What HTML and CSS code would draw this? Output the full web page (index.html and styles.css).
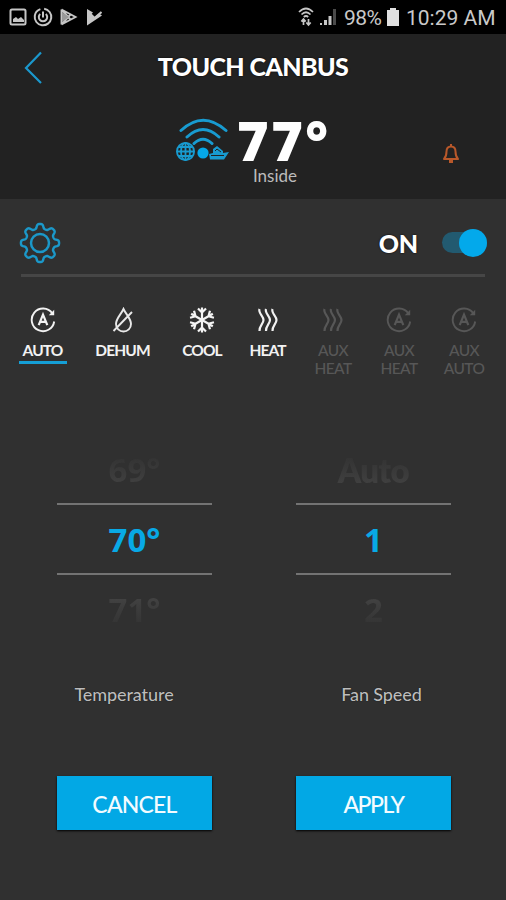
FILE: index.html
```html
<!DOCTYPE html>
<html lang="en">
<head>
<meta charset="utf-8">
<title>Touch Canbus</title>
<link rel="stylesheet" href="styles.css">
</head>
<body>
<svg class="defs" width="0" height="0" aria-hidden="true">
  <symbol id="auto" viewBox="0 0 26 26">
    <path d="M22.3 6.4A11.3 11.3 0 1 0 24.2 14.5" fill="none" stroke="currentColor" stroke-width="1.9"/>
    <path d="M24.200 2.800V8.200h-5.400z" fill="currentColor"/>
    <path d="M8.7 18.2L13 7.6l4.3 10.6M10.2 14.8h5.6" fill="none" stroke="currentColor" stroke-width="2.2"/>
  </symbol>
  <symbol id="heat" viewBox="0 0 22 26">
    <path d="M2.500 2C1 6 6.500 9 6.500 13S2 19 2.500 24M9 2C7.500 6 13 9 13 13S8.500 19 9 24M15.500 2C14 6 19.500 9 19.500 13S15 19 15.500 24" fill="none" stroke="currentColor" stroke-width="2.200"/>
  </symbol>
</svg>
<div class="status">
  <svg class="status-left" width="94" height="20" viewBox="0 0 94 20">
    <g fill="none" stroke="#c6c6c6" stroke-width="2">
      <rect x="2.500" y="2.500" width="15" height="15" rx="1.500"/>
      <circle cx="35" cy="10" r="8.300" stroke-dasharray="48 4" transform="rotate(-82 35 10)"/>
      <path d="M32.200 6.900a4.200 4.200 0 1 0 5.600 0M35 4.500v6"/>
    </g>
    <path d="M5 15v-3l3-2 2 2 3-2 3 3v2z" fill="#c6c6c6"/>
    <path d="M53.500 2.500v15M53.500 2.500l14 7.500-14 7.500M53.500 2.500l9 10M53.500 17.500l9-10" fill="none" stroke="#c6c6c6" stroke-width="1.900"/>
    <path d="M54 5l7 5-7 5z" fill="#999"/>
    <path d="M79 2v16.500l15-10-3-2-5 4-3-3 2-2z" fill="#c6c6c6"/>
    <path d="M82.500 7l4 4L93.500 5" fill="none" stroke="#c6c6c6" stroke-width="2"/>
  </svg>
  <div class="status-right">
    <svg width="40" height="20" viewBox="0 0 40 20">
      <g fill="none" stroke="#c6c6c6" stroke-width="1.700">
        <path d="M1 5Q8 -2 15 5M3.500 7.500Q8 3 12.500 7.500M5.800 10Q8 8 10.200 10"/>
        <path d="M5.500 12v6M3.300 14.500L5.500 12l2.200 2.500M10.500 12v6M8.300 15.500L10.500 18l2.200-2.500"/>
      </g>
      <path d="M22 16h2v2h-2zM26 13h3v5h-3zM30.500 9h3v9h-3z" fill="#c6c6c6"/>
      <path d="M35 2h3v16h-3z" fill="#4a4a4a"/>
    </svg>
    <span class="pct">98%</span>
    <svg class="battery" width="12" height="18" viewBox="0 0 12 18"><path d="M0 2h3V0h6v2h3v16H0z" fill="#e0e0e0"/></svg>
    <span class="clock">10:29 AM</span>
  </div>
</div>
<header>
  <div class="titlebar">
    <svg width="20" height="34" viewBox="0 0 20 34"><path d="M17 2.500L2 18l15 15" fill="none" stroke="#1b98cd" stroke-width="2.200"/></svg>
    <h1>TOUCH CANBUS</h1>
  </div>
  <div class="reading">
    <svg class="wifi" width="54" height="46" viewBox="0 0 54 46">
      <g fill="none" stroke="#189bd0" stroke-width="3" stroke-linecap="round">
        <path d="M6 12.500Q28-8 51 12.500M12 19Q28 4 44 19M19 25.500Q28 17 37 25.500"/>
      </g>
      <circle cx="28" cy="35" r="5.600" fill="#05a8e8"/>
      <g fill="none" stroke="#189bd0" stroke-width="1.800">
        <circle cx="10.500" cy="33.500" r="8.600"/>
        <ellipse cx="10.500" cy="33.500" rx="4.500" ry="8.600"/>
        <path d="M10.500 25v17M2 33.500h17M3.500 29h14M3.500 38h14"/>
      </g>
      <path d="M34 36l4-1v-4l4-3 6 5v2l6-1-5 7.500H35z" fill="#189bd0"/>
      <path d="M40 33l2-2 4 3M36 37.500h13" fill="none" stroke="#222" stroke-width="1"/>
    </svg>
    <div class="temp"><strong>77°</strong><span class="inside">Inside</span></div>
    <svg class="bell" width="18" height="22" viewBox="0 0 18 22"><path d="M2 16c2-2 2.500-4 2.500-7.500 0-3 1.700-5 4.500-5s4.500 2 4.500 5c0 3.500.5 5.500 2.500 7.500zM9 1v2.500" fill="none" stroke="#b9582a" stroke-width="2" stroke-linejoin="round"/><path d="M7 16h4v4H7z" fill="#b9582a"/></svg>
  </div>
</header>
<main>
  <section class="power">
    <svg class="gear" width="42" height="42" viewBox="-21 -21 42 42">
      <path id="gear" d="" fill="none" stroke="#1b98c9" stroke-width="2.400" stroke-linejoin="round"/>
      <circle r="9" fill="none" stroke="#1b98c9" stroke-width="2.500"/>
    </svg>
    <span class="on">ON</span>
    <div class="switch"><i></i></div>
  </section>
  <nav>
    <div class="mode selected"><svg width="26" height="26"><use href="#auto"/></svg><span>AUTO</span></div>
    <div class="mode"><svg width="22" height="26" viewBox="0 0 22 26"><path d="M11.500 2C9 7.500 4 11.500 4 17a7.500 7.500 0 0 0 15 0C19 11.500 14 7.500 11.500 2zM1.500 24L20 5" fill="none" stroke="#e8e8e8" stroke-width="1.900"/></svg><span>DEHUM</span></div>
    <div class="mode"><svg width="26" height="26" viewBox="-13 -13 26 26"><g fill="none" stroke="#f4f4f4" stroke-width="2.200">
      <path d="M0-12.500V12.500M-4-11.500L0-7.500 4-11.500M-4 11.500L0 7.500 4 11.500"/>
      <path transform="rotate(60)" d="M0-12.500V12.500M-4-11.500L0-7.500 4-11.500M-4 11.500L0 7.500 4 11.500"/>
      <path transform="rotate(120)" d="M0-12.500V12.500M-4-11.500L0-7.500 4-11.500M-4 11.500L0 7.500 4 11.500"/></g></svg><span>COOL</span></div>
    <div class="mode"><svg width="22" height="26"><use href="#heat"/></svg><span>HEAT</span></div>
    <div class="mode off"><svg width="22" height="26"><use href="#heat"/></svg><span>AUX<br>HEAT</span></div>
    <div class="mode off"><svg width="26" height="26"><use href="#auto"/></svg><span>AUX<br>HEAT</span></div>
    <div class="mode off"><svg width="26" height="26"><use href="#auto"/></svg><span>AUX<br>AUTO</span></div>
  </nav>
  <section class="pickers">
    <div class="picker"><div class="ghost before">69°</div><div class="value">70°</div><div class="ghost after">71°</div><label class="t">Temperature</label><button class="cancel">CANCEL</button></div>
    <div class="picker"><div class="ghost before auto">Auto</div><div class="value">1</div><div class="ghost after">2</div><label class="f">Fan Speed</label><button class="apply">APPLY</button></div>
  </section>
</main>
<script src="gear.js"></script>
</body>
</html>
```
FILE: styles.css
```css
* { box-sizing: border-box; }
body { margin: 0; width: 506px; height: 900px; background: #303030; color: #fff; font-family: Lato, sans-serif; overflow: hidden; }
.defs { position: absolute; }
svg { display: block; flex: none; }
.status { height: 34px; background: #000; display: flex; justify-content: space-between; padding: 7px 10px 0 8px; color: #c9c9c9; font-family: Roboto, sans-serif; }
.status-right { display: flex; height: 20px; line-height: 22px; font-size: 21px; white-space: nowrap; }
.pct { margin-left: 6px; width: 43px; letter-spacing: -0.5px; }
.battery { margin-top: 1px; }
.clock { margin-left: 7px; width: 90px; }
header { height: 165px; background: #222; }
.titlebar { height: 66px; display: grid; grid-template-columns: 48px 1fr 48px; padding-top: 16px; }
.titlebar svg { margin-left: 24px; }
h1 { margin: 0; text-align: center; font-size: 25px; line-height: 33px; font-weight: 900; letter-spacing: -0.6px; white-space: nowrap; text-shadow: 0 0 2px #000; }
.reading { display: flex; padding-left: 175px; }
.wifi { margin-top: 18px; }
.temp { width: 110px; margin-left: 8px; }
.temp strong { display: block; height: 41px; margin-top: 19px; line-height: 43px; font-family: "Open Sans", sans-serif; font-size: 54px; font-weight: 800; letter-spacing: 2.500px; }
.inside { display: block; width: 76px; margin-top: 5px; text-align: center; font-size: 17px; line-height: 22px; color: #bbb; }
.bell { margin: 43px 0 0 95px; }
.power { height: 78px; margin: 0 21px; border-bottom: 3px solid #464646; display: flex; align-items: center; padding-top: 12px; }
.gear { margin-left: -2px; }
.on { margin-left: auto; font-size: 25px; font-weight: 900; letter-spacing: -0.2px; text-shadow: 0 0 2px #000; }
.switch { width: 45px; height: 21px; margin: 0 -2px 0 24px; border-radius: 11px; background: #225a70; display: flex; justify-content: flex-end; align-items: center; }
.switch i { width: 28px; height: 28px; border-radius: 50%; background: #03a9eb; flex: none; }
nav { height: 151px; padding: 30px 0 0 10px; display: grid; grid-template-columns: 65px 95px 64px 67px 64px 68px 62px; }
.mode { display: flex; flex-direction: column; align-items: center; color: #f2f2f2; }
.mode span { margin-top: 8px; font-size: 15.500px; font-weight: 700; line-height: 18px; letter-spacing: -0.9px; text-align: center; white-space: nowrap; }
.selected span { border-bottom: 3px solid #159fd6; width: 48px; height: 23px; }
.mode.off { color: #575757; }
.off span { font-weight: 500; letter-spacing: -0.6px; }
.pickers { display: grid; grid-template-columns: 155px 155px; column-gap: 84px; padding-left: 57px; }
.picker { display: flex; flex-direction: column; text-align: center; font-family: "Open Sans", sans-serif; font-size: 33px; font-weight: 700; }
.ghost { height: 75px; line-height: 84px; color: transparent; background-clip: text; -webkit-background-clip: text; }
.before { background-image: linear-gradient(#323232 35%, #404040 75%); }
.auto { font-family: Lato, sans-serif; font-weight: 800; line-height: 84px; letter-spacing: -0.5px; }
.after { height: 70px; line-height: 70px; background-image: linear-gradient(#434343 30%, #323232 75%); }
.value { height: 72px; line-height: 70px; color: #08a9e6; border: solid #737373; border-width: 2px 0; }
label { font-family: Lato, sans-serif; font-size: 18px; font-weight: 500; line-height: 24px; letter-spacing: -0.1px; color: #bcbcbc; margin-top: 37px; text-shadow: 0 0 1px #000; }
.t { margin-left: -21px; }
.f { margin-left: 16px; }
button { margin: 70px 0 0; padding: 0; height: 54px; border: 0; background: #02a8e5; color: #f2fbff; font: 500 23px/56px Lato, sans-serif; letter-spacing: -0.8px; box-shadow: 0 1px 2px #000; }
.apply { letter-spacing: -1.5px; }
```
FILE: gear.js
```js
// Eight-tooth gear outline
const points = [];
for (let i = 0; i <= 240; i++) {
  const a = i * Math.PI * 2 / 240;
  const r = 16.8 + 2.4 * Math.tanh(1.8 * Math.cos(8 * a));
  points.push((r * Math.cos(a)).toFixed(2) + ' ' + (r * Math.sin(a)).toFixed(2));
}
document.getElementById('gear').setAttribute('d', 'M' + points.join('L') + 'Z');
```
